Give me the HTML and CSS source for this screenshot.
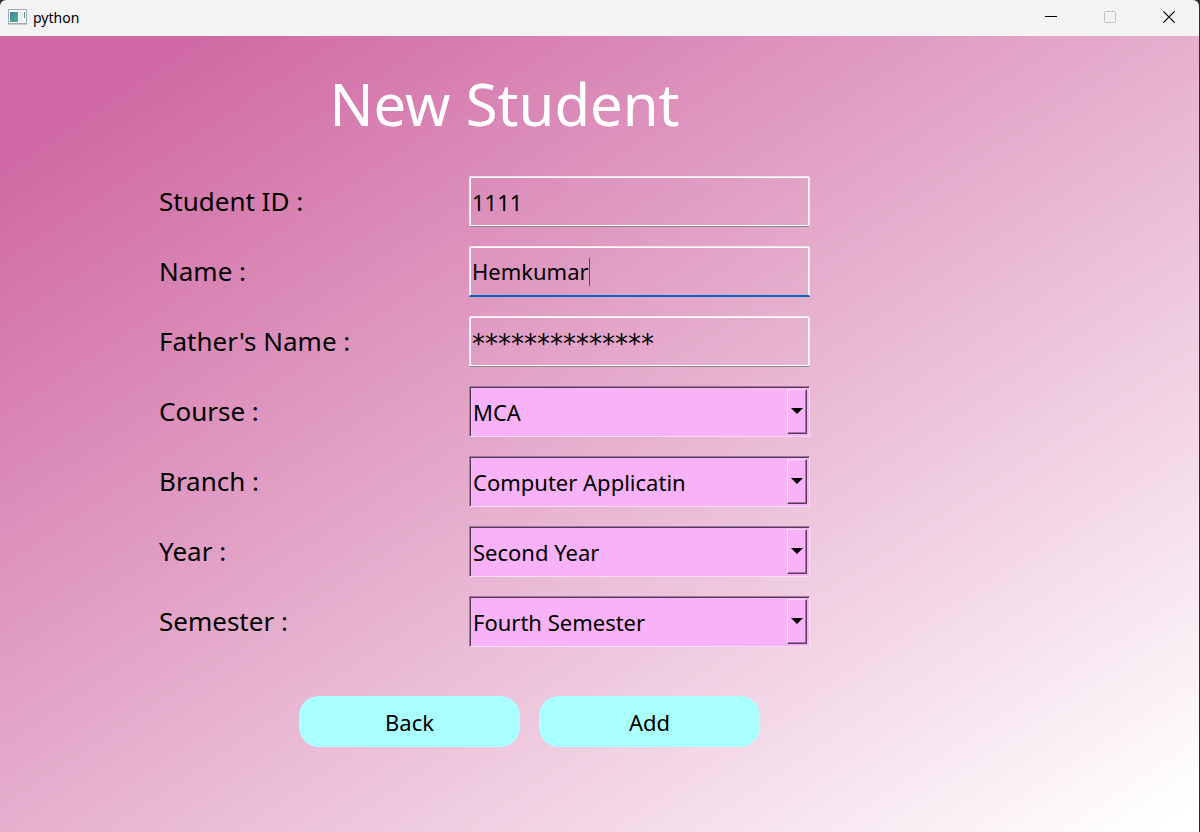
FILE: index.html
```html
<!DOCTYPE html>
<html lang="en">
<head>
<meta charset="utf-8">
<title>python</title>
<link rel="stylesheet" href="styles.css">
</head>
<body>
<div class="window">
  <header class="titlebar">
    <svg class="app-icon" width="19" height="16" viewBox="0 0 19 16" aria-hidden="true">
      <defs><linearGradient id="screen" x1="0" y1="0" x2="1" y2="1"><stop offset="0" stop-color="#3b78a8"/><stop offset="1" stop-color="#58b882"/></linearGradient></defs>
      <rect x=".5" y=".5" width="18" height="14" fill="#f6f8f9" stroke="#a5a7ae"/>
      <path d="M0 15.5h19" stroke="#c9c9cc"/>
      <rect x="2" y="3" width="8" height="10" fill="url(#screen)"/>
      <rect x="11" y="3" width="4" height="10" fill="#e9eef0"/>
      <rect x="16" y="3" width="1" height="6" fill="#4a9a9a"/>
    </svg>
    <span class="caption">python</span>
    <div class="controls">
      <button type="button" class="control" aria-label="Minimize"><svg width="12" height="12" viewBox="0 0 12 12"><path d="M0 5.5h12" stroke="#000"/></svg></button>
      <button type="button" class="control" aria-label="Maximize" disabled><svg width="12" height="12" viewBox="0 0 12 12"><rect x=".5" y=".5" width="11" height="11" rx="1" fill="none" stroke="#c3c3c3"/></svg></button>
      <button type="button" class="control" aria-label="Close"><svg width="12" height="12" viewBox="0 0 12 12"><path d="M.4.4l11.2 11.2M11.6.4L.4 11.6" stroke="#000" stroke-width="1.2"/></svg></button>
    </div>
  </header>
  <main class="content">
    <form class="form">
      <h1 class="title">New Student</h1>
      <div class="fields">
        <label class="label" for="sid">Student ID :</label>
        <input class="text" id="sid" type="text" value="1111">
        <label class="label" for="name">Name :</label>
        <div class="active">
          <input class="text focused" id="name" type="text" value="Hemkumar">
          <span class="caret-line" aria-hidden="true"><span class="caret-text">Hemkumar</span></span>
        </div>
        <label class="label" for="father">Father's Name :</label>
        <input class="text masked" id="father" type="text" value="**************">
        <label class="label" for="course">Course :</label>
        <div class="combo"><select class="select" id="course"><option>MCA</option></select><span class="drop"></span></div>
        <label class="label" for="branch">Branch :</label>
        <div class="combo"><select class="select" id="branch"><option>Computer Applicatin</option></select><span class="drop"></span></div>
        <label class="label" for="year">Year :</label>
        <div class="combo"><select class="select" id="year"><option>Second Year</option></select><span class="drop"></span></div>
        <label class="label" for="semester">Semester :</label>
        <div class="combo"><select class="select" id="semester"><option>Fourth Semester</option></select><span class="drop"></span></div>
      </div>
      <div class="actions">
        <button type="button" class="action">Back</button>
        <button type="button" class="action">Add</button>
      </div>
    </form>
  </main>
</div>
</body>
</html>
```
FILE: styles.css
```css
* { box-sizing: border-box; }
body {
  margin: 0;
  background: #2b2b33;
  color: #000;
  font-family: "Noto Sans", "Open Sans", sans-serif;
}
.window {
  display: flex;
  flex-direction: column;
  min-height: 100vh;
  margin-right: 1px;
  border-radius: 6px 6px 0 0;
  overflow: hidden;
}
.titlebar {
  display: flex;
  align-items: center;
  height: 36px;
  padding-left: 8px;
  background: #f3f3f3;
}
.app-icon { margin-bottom: 2px; }
.caption {
  flex: 1;
  margin-left: 6px;
  font-size: 14px;
  line-height: 20px;
}
.controls { display: flex; height: 100%; }
.control {
  display: flex;
  align-items: center;
  justify-content: center;
  width: 59px;
  padding: 0 1px 2px 0;
  border: 0;
  background: none;
}
.content {
  flex: 1;
  padding: 28px 159px 85px;
  background: linear-gradient(to bottom right, #d069a3 8%, #fff 98%);
}
.form { max-width: 651px; }
.title {
  margin: 0 0 32px;
  padding-left: 40px;
  color: #fff;
  font-size: 58px;
  font-weight: 400;
  line-height: 80px;
  text-align: center;
}
.fields {
  display: grid;
  grid-template-columns: 310px minmax(0, 1fr);
  row-gap: 19px;
}
.label {
  font-size: 26px;
  line-height: 51px;
}
.text {
  width: 100%;
  height: 51px;
  padding: 0 2px;
  border: 1px solid rgba(255, 255, 255, .7);
  border-bottom-color: #868686;
  border-radius: 2px;
  box-shadow: inset 0 0 0 1px #fff;
  outline: 0;
  background: transparent;
  color: #000;
  font: 22px "Noto Sans", "Open Sans", sans-serif;
}
.focused {
  border-bottom: 2px solid #0067c0;
  border-radius: 2px 2px 0 0;
  box-shadow: inset 1px 1px #fff, inset -1px 0 #fff;
}
.masked {
  padding-top: 4px;
  font-family: "DejaVu Sans", sans-serif;
  font-size: 26px;
}
.active { position: relative; height: 51px; }
.caret-line {
  position: absolute;
  top: 12px;
  left: 3px;
  height: 28px;
  border-right: 1px solid #1f6b45;
  font-size: 22px;
  line-height: 28px;
  pointer-events: none;
}
.caret-text { visibility: hidden; }
.combo { position: relative; height: 51px; }
.select {
  width: 100%;
  height: 51px;
  padding: 0 24px 0 3px;
  border: 1px solid;
  border-color: #a573a5 #fbdcfb #fbdcfb #a573a5;
  border-radius: 0;
  box-shadow: inset 1px 1px #533c53;
  outline: 0;
  appearance: none;
  background: #f8b3f8;
  color: #000;
  font: 22px "Noto Sans", "Open Sans", sans-serif;
}
.drop {
  position: absolute;
  top: 3px;
  right: 3px;
  display: flex;
  align-items: center;
  justify-content: center;
  width: 20px;
  height: 45px;
  padding-bottom: 2px;
  border: 1px solid;
  border-color: #fbdcfb #533c53 #533c53 #fbdcfb;
  box-shadow: inset -1px -1px #a573a5;
  pointer-events: none;
}
.drop::after {
  content: "";
  border: 6px solid transparent;
  border-top-color: #000;
  border-bottom: 0;
}
.actions {
  display: flex;
  justify-content: center;
  gap: 19px;
  margin: 49px 50px 0 140px;
}
.action {
  flex: 1;
  height: 51px;
  border: 0;
  border-radius: 20px;
  background: #aff;
  color: #000;
  font: 22px "Noto Sans", "Open Sans", sans-serif;
}
```
